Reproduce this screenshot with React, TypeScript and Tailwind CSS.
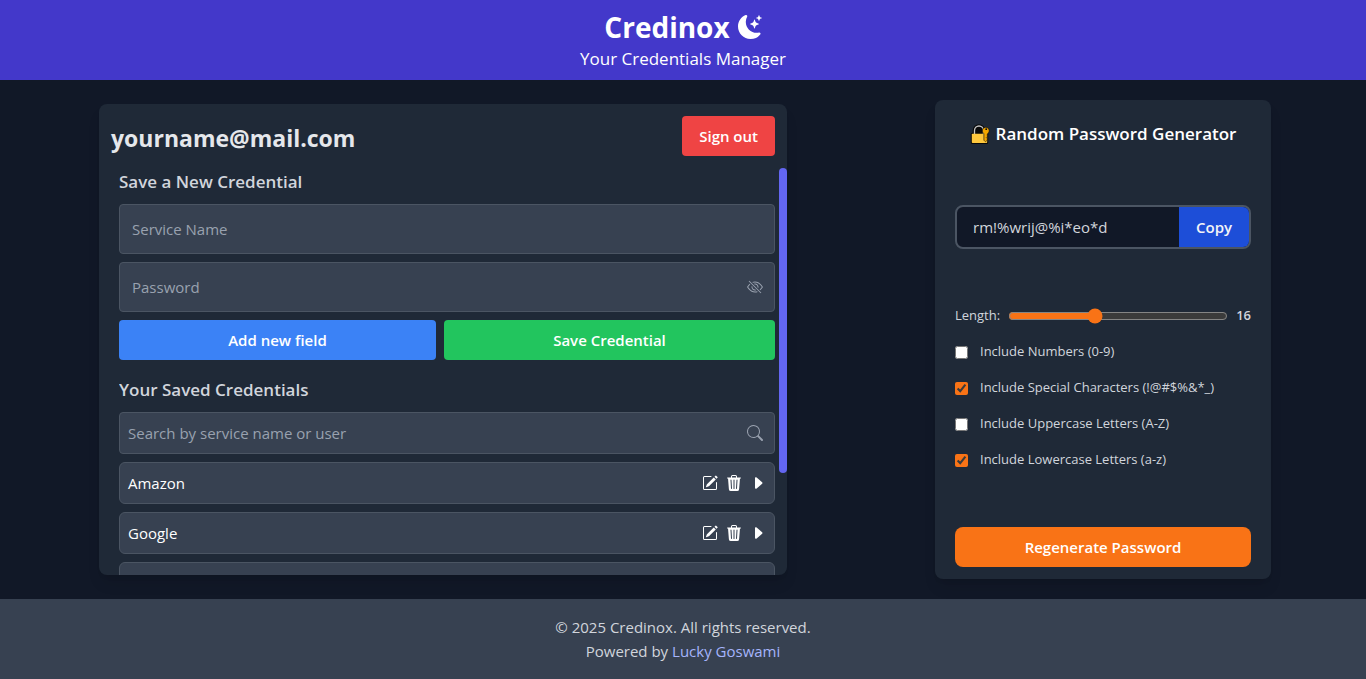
import { useState } from "react";
import {
  BsCaretRightFill,
  BsEyeSlash,
  BsMoonStarsFill,
  BsPencilSquare,
  BsSearch,
  BsTrash3Fill,
} from "react-icons/bs";

const services = ["Amazon", "Google", ""];

function LockIcon() {
  return (
    <svg viewBox="0 0 20 20" className="h-5 w-5 shrink-0" aria-hidden="true">
      <path d="M4.5 10V6.5a4.5 4.5 0 0 1 9 0V10" fill="#0a0a0a" stroke="#0a0a0a" strokeWidth="3.6" />
      <rect x="0.8" y="8.7" width="17.4" height="11.3" rx="1.5" fill="#0a0a0a" />
      <path d="M4.5 10V6.5a4.5 4.5 0 0 1 9 0V10" fill="#0a0a0a" stroke="#c4c4c4" strokeWidth="1.3" />
      <rect x="1.8" y="9.7" width="15.4" height="9.3" rx="0.8" fill="#ffc83d" />
      <path
        d="M15.9 3.2a3.6 3.6 0 0 0-2 6.6v6.4l1.6 1.6 1.8-1.7v-1.5l-1-1 1-1V10a3.6 3.6 0 0 0-1.4-6.8z"
        fill="#f2a600"
        stroke="#0a0a0a"
        strokeWidth="0.6"
      />
      <circle cx="16.2" cy="5.2" r="0.9" fill="#0a0a0a" />
    </svg>
  );
}

function Option({ label, initial }: { label: string; initial: boolean }) {
  const [checked, setChecked] = useState(initial);
  return (
    <label className="flex h-5 items-center gap-3 text-[13px] text-gray-300">
      <input
        type="checkbox"
        checked={checked}
        onChange={(e) => setChecked(e.target.checked)}
        className="h-[13px] w-[13px] accent-[#f97316]"
      />
      {label}
    </label>
  );
}

function CredentialsCard() {
  return (
    <section className="flex-1 overflow-hidden rounded-lg bg-[#1f2937] pt-3 shadow-lg lg:self-center">
      <div className="mb-3 flex h-10 items-center justify-between px-3">
        <h2 className="pt-1 text-[23px] leading-9 font-bold text-gray-200">yourname@mail.com</h2>
        <button type="button" className="h-10 rounded-sm bg-[#ef4444] px-[17px] text-[15px] font-semibold text-white">
          Sign out
        </button>
      </div>
      <div className="flex h-[60vh] pl-5">
        <div className="mr-1 flex-1 overflow-y-auto [scrollbar-width:none]">
          <h3 className="mb-2 text-[17px] leading-7 font-semibold text-gray-300">Save a New Credential</h3>
          <form className="flex flex-col gap-2" onSubmit={(e) => e.preventDefault()}>
            <input
              type="text"
              aria-label="Service Name"
              placeholder="Service Name"
              className="h-[50px] w-full rounded-sm border border-[#4b5563] bg-[#374151] px-3 text-[15px] text-white placeholder:text-gray-400"
            />
            <div className="flex h-[50px] items-center rounded-sm border border-[#4b5563] bg-[#374151] pr-[11px]">
              <input
                type="password"
                aria-label="Password"
                placeholder="Password"
                className="h-full min-w-0 flex-1 bg-transparent px-3 text-[15px] text-white placeholder:text-gray-400"
              />
              <button type="button" aria-label="Show password" className="text-gray-400">
                <BsEyeSlash size={16} />
              </button>
            </div>
            <div className="flex gap-2">
              <button type="button" className="h-10 flex-auto rounded-sm bg-[#3b82f6] px-4 text-[15px] font-semibold text-white">
                Add new field
              </button>
              <button type="submit" className="h-10 flex-auto rounded-sm bg-[#22c55e] px-4 text-[15px] font-semibold text-white">
                Save Credential
              </button>
            </div>
          </form>
          <h3 className="mt-4 mb-2 text-[17px] leading-7 font-semibold text-gray-300">Your Saved Credentials</h3>
          <div className="mb-2 flex h-[42px] items-center rounded-sm border border-[#4b5563] bg-[#374151] pr-[11px]">
            <input
              type="text"
              aria-label="Search by service name or user"
              placeholder="Search by service name or user"
              className="h-full min-w-0 flex-1 bg-transparent px-2 text-[15px] text-white placeholder:text-gray-400"
            />
            <BsSearch size={16} className="text-gray-400" />
          </div>
          <ul className="flex flex-col gap-2 pb-2">
            {services.map((name) => (
              <li
                key={name}
                className="flex h-[42px] items-center rounded-md border border-[#4b5563] bg-[#374151] px-2 text-[15px] text-white"
              >
                <span className="flex-1">{name}</span>
                <span className="flex items-center gap-2">
                  <button type="button" aria-label={`Edit ${name}`}>
                    <BsPencilSquare size={16} />
                  </button>
                  <button type="button" aria-label={`Delete ${name}`}>
                    <BsTrash3Fill size={16} />
                  </button>
                  <button type="button" aria-label={`Expand ${name}`}>
                    <BsCaretRightFill size={16} />
                  </button>
                </span>
              </li>
            ))}
          </ul>
        </div>
        <div className="w-2">
          <div className="h-3/4 rounded-full bg-[#6366f1]" />
        </div>
      </div>
    </section>
  );
}

function GeneratorCard() {
  const [length, setLength] = useState(16);
  return (
    <section className="flex flex-col justify-between rounded-lg bg-[#1f2937] px-5 py-3 shadow-lg lg:w-84">
      <h2 className="flex h-11 items-center justify-center gap-1.5 text-[17px] font-semibold text-white">
        <LockIcon />
        Random Password Generator
      </h2>
      <div className="flex h-11 overflow-hidden rounded-lg border-2 border-[#4b5563] bg-[#111827]">
        <input
          type="text"
          readOnly
          aria-label="Generated password"
          value="rm!%wrij@%i*eo*d"
          className="min-w-0 flex-1 bg-transparent px-4 text-[15px] text-gray-300"
        />
        <button type="button" className="bg-[#1d4ed8] px-[17px] text-[15px] font-semibold text-gray-100">
          Copy
        </button>
      </div>
      <div className="flex flex-col gap-4 py-2">
        <label className="flex h-5 items-center gap-2 text-[13px] text-gray-300">
          Length:
          <input
            type="range"
            min={6}
            max={32}
            value={length}
            onChange={(e) => setLength(Number(e.target.value))}
            className="min-w-0 flex-1 accent-[#f97316]"
          />
          <span className="font-semibold">{length}</span>
        </label>
        <Option label="Include Numbers (0-9)" initial={false} />
        <Option label="Include Special Characters (!@#$%&*_)" initial={true} />
        <Option label="Include Uppercase Letters (A-Z)" initial={false} />
        <Option label="Include Lowercase Letters (a-z)" initial={true} />
      </div>
      <button type="button" className="h-10 rounded-lg bg-[#f97316] text-[15px] font-semibold text-white">
        Regenerate Password
      </button>
    </section>
  );
}

export default function App() {
  return (
    <div className="flex min-h-screen flex-col bg-[#111827] font-['Open_Sans','Noto_Sans',sans-serif]">
      <header className="flex h-20 flex-col items-center justify-center bg-[#4338ca] pt-0.5 text-white">
        <h1 className="flex items-center gap-2 text-[28px] leading-9 font-bold">
          Credinox
          <BsMoonStarsFill size={24} />
        </h1>
        <p className="text-[17px] leading-7">Your Credentials Manager</p>
      </header>
      <main className="flex flex-1 flex-col gap-5 px-4 py-5 lg:flex-row lg:gap-[148px] lg:pr-[95px] lg:pl-[99px]">
        <CredentialsCard />
        <GeneratorCard />
      </main>
      <footer className="flex h-20 flex-col items-center justify-center bg-[#374151] text-[15px] leading-6 text-gray-300">
        <p>© 2025 Credinox. All rights reserved.</p>
        <p>
          Powered by{" "}
          <a href="#" className="text-[#a5b4fc]">
            Lucky Goswami
          </a>
        </p>
      </footer>
    </div>
  );
}
